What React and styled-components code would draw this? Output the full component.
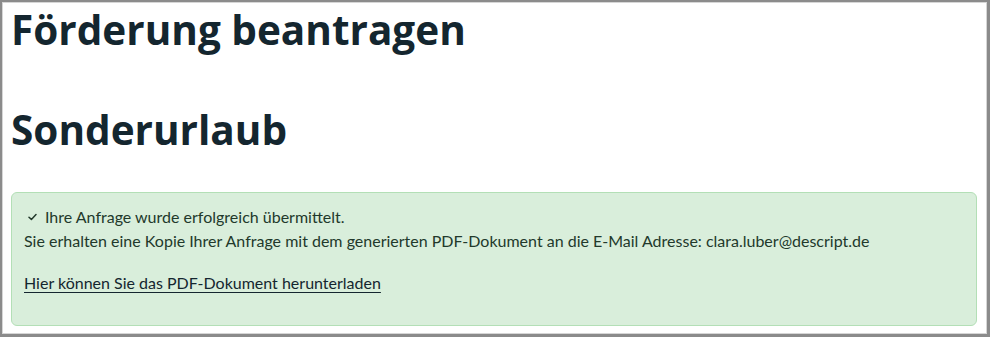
import React from 'react';
import styled, { createGlobalStyle } from 'styled-components';

const GlobalStyle = createGlobalStyle`
  html, body {
    margin: 0;
    padding: 0;
    background: #ffffff;
  }
  body {
    font-family: Lato, "Open Sans", Arial, sans-serif;
  }
`;

const Frame = styled.div`
  box-sizing: border-box;
  width: 990px;
  height: 337px;
  border: 2px solid #8b8b8b;
  border-right-width: 3px;
  border-bottom-width: 3px;
  box-shadow: inset 0 0 0 1px #d6d6d6;
  padding: 0 10px 0 9px;
  display: flex;
  flex-direction: column;
  overflow: hidden;
`;

const Headline = styled.h1`
  margin: ${props => props.spacing || '0'};
  font-family: "Open Sans", sans-serif;
  font-weight: 700;
  font-size: 40.5px;
  line-height: 48px;
  color: #14262f;
`;

const Alert = styled.div`
  margin-top: 38px;
  border: 1px solid #b3dfb6;
  border-radius: 6px;
  background: #d9eedb;
  padding: 12px 12px 30px 12px;
  color: #22392b;
  font-size: 16px;
  line-height: 24px;
`;

const StatusRow = styled.div`
  display: flex;
  align-items: center;
  gap: 8px;
  padding-left: 4px;
`;

const Line = styled.p`
  margin: 0 0 ${props => props.gap || '0'};
`;

const DownloadLink = styled.a`
  color: #14262f;
  text-decoration: underline;
  text-underline-offset: 3px;
  cursor: pointer;
`;

function CheckIcon() {
  return (
    <svg width="9" height="8" viewBox="0 0 9 8" aria-hidden="true">
      <path d="M1 4.2 L3.4 6.4 L8 1.6" fill="none" stroke="#22392b" strokeWidth="1.5" strokeLinecap="round" strokeLinejoin="round" />
    </svg>
  );
}

export default function App() {
  return (
    <>
      <GlobalStyle />
      <Frame>
        <Headline spacing="4px 0 0">Förderung beantragen</Headline>
        <Headline as="h2" spacing="52px 0 0">Sonderurlaub</Headline>
        <Alert>
          <StatusRow>
            <CheckIcon />
            <span>Ihre Anfrage wurde erfolgreich übermittelt.</span>
          </StatusRow>
          <Line gap="18px">
            Sie erhalten eine Kopie Ihrer Anfrage mit dem generierten PDF-Dokument an die E-Mail Adresse: clara.luber@descript.de
          </Line>
          <Line>
            <DownloadLink>Hier können Sie das PDF-Dokument herunterladen</DownloadLink>
          </Line>
        </Alert>
      </Frame>
    </>
  );
}
